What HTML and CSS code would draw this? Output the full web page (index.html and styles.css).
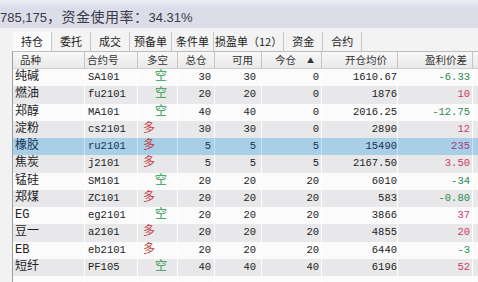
FILE: index.html
```html
<!DOCTYPE html>
<html lang="zh-CN">
<head>
    <meta charset="UTF-8">
    <title>持仓</title>
    <link rel="stylesheet" href="styles.css">
</head>
<body>
    <div class="topbar">785,175<span class="cn">，资金使用率：</span>34.31%</div>

    <div class="main">
        <div class="side"></div>
        <div class="panel">
            <div class="tabs">
                <div class="tab active">持仓</div>
                <div class="tab">委托</div>
                <div class="tab">成交</div>
                <div class="tab w3">预备单</div>
                <div class="tab w3">条件单</div>
                <div class="tab wide">损盈单（12）</div>
                <div class="tab">资金</div>
                <div class="tab">合约</div>
            </div>

            <div class="grid">
                <div class="row head">
                    <div>品种</div><div>合约号</div><div>多空</div><div>总仓</div><div>可用</div>
                    <div>今仓<span class="sort">▲</span></div><div>开仓均价</div><div>盈利价差</div><div></div>
                </div>
                <div class="row">
                    <div>纯碱</div><div>SA101</div><div class="short">空</div><div>30</div><div>30</div><div>0</div><div>1610.67</div><div class="down">-6.33</div><div></div>
                </div>
                <div class="row alt">
                    <div>燃油</div><div>fu2101</div><div class="short">空</div><div>20</div><div>20</div><div>0</div><div>1876</div><div class="up">10</div><div></div>
                </div>
                <div class="row">
                    <div>郑醇</div><div>MA101</div><div class="short">空</div><div>40</div><div>40</div><div>0</div><div>2016.25</div><div class="down">-12.75</div><div></div>
                </div>
                <div class="row alt">
                    <div>淀粉</div><div>cs2101</div><div class="long">多</div><div>30</div><div>30</div><div>0</div><div>2890</div><div class="up">12</div><div></div>
                </div>
                <div class="row sel">
                    <div>橡胶</div><div>ru2101</div><div class="long">多</div><div>5</div><div>5</div><div>5</div><div>15490</div><div class="up">235</div><div></div>
                </div>
                <div class="row alt">
                    <div>焦炭</div><div>j2101</div><div class="long">多</div><div>5</div><div>5</div><div>5</div><div>2167.50</div><div class="up">3.50</div><div></div>
                </div>
                <div class="row">
                    <div>锰硅</div><div>SM101</div><div class="short">空</div><div>20</div><div>20</div><div>20</div><div>6010</div><div class="down">-34</div><div></div>
                </div>
                <div class="row alt">
                    <div>郑煤</div><div>ZC101</div><div class="long">多</div><div>20</div><div>20</div><div>20</div><div>583</div><div class="down">-0.80</div><div></div>
                </div>
                <div class="row">
                    <div>EG</div><div>eg2101</div><div class="short">空</div><div>20</div><div>20</div><div>20</div><div>3866</div><div class="up">37</div><div></div>
                </div>
                <div class="row alt">
                    <div>豆一</div><div>a2101</div><div class="long">多</div><div>20</div><div>20</div><div>20</div><div>4855</div><div class="up">20</div><div></div>
                </div>
                <div class="row">
                    <div>EB</div><div>eb2101</div><div class="long">多</div><div>20</div><div>20</div><div>20</div><div>6440</div><div class="down">-3</div><div></div>
                </div>
                <div class="row alt">
                    <div>短纤</div><div>PF105</div><div class="short">空</div><div>40</div><div>40</div><div>40</div><div>6196</div><div class="up">52</div><div></div>
                </div>
                <div class="row">
                    <div></div><div></div><div></div><div></div><div></div><div></div><div></div><div></div><div></div>
                </div>
            </div>
        </div>
    </div>
</body>
</html>
```

FILE: styles.css
```css
body {
    margin: 0;
    width: 478px;
    height: 282px;
    overflow: hidden;
    background: #f3f3f3;
    color: #222;
    font-family: "Noto Sans CJK SC", sans-serif;
}

.topbar {
    height: 22px;
    padding-top: 6px;
    line-height: 22px;
    background: linear-gradient(#eef0f5, #dbdde9 25%, #dcdde9);
    color: #3a3a48;
    font-family: "Liberation Sans", "Noto Sans CJK SC", sans-serif;
    font-size: 13px;
    white-space: nowrap;
}

.topbar .cn {
    font-size: 14px;
    letter-spacing: 0.5px;
}

.main {
    display: flex;
}

.side {
    width: 12px;
    background: #f2f2f2;
}

.panel {
    flex: 1;
}

.tabs {
    display: flex;
    align-items: flex-end;
    height: 23px;
    padding-left: 1px;
    background: #f3f3f3;
}

.tab {
    height: 19px;
    line-height: 19px;
    padding: 0 8px;
    font-size: 11px;
    border-right: 1px solid #c6c6c6;
    white-space: nowrap;
}

.tab.w3 {
    padding: 0 4px;
}

.tab.wide {
    padding: 0 1px;
}

.tab.active {
    background: #fbfbfb;
}

.grid {
    border-left: 1px solid #9e9e9e;
    background: #fbfbfb;
}

.row {
    display: grid;
    grid-template-columns: 72px 53px 40px 37px 47px 60px 76px 75px 1fr;
    height: 17.25px;
}

.row > div {
    border-right: 1px solid #fff;
    line-height: 17px;
    white-space: nowrap;
    overflow: hidden;
    text-align: right;
    font-family: "Liberation Mono", "Noto Sans CJK SC", monospace;
    font-size: 10.5px;
}

.row > div:nth-child(1) {
    text-align: left;
    padding-left: 2px;
    font-size: 12px;
}

.row > div:nth-child(2) {
    text-align: left;
    padding-left: 3px;
}

.row > div:nth-child(3) {
    text-align: left;
    padding-left: 5px;
    font-size: 12px;
}

.row > div:nth-child(3).short {
    padding-left: 17px;
}

.row > div:nth-child(4) { padding-right: 3px; }
.row > div:nth-child(5) { padding-right: 5px; }
.row > div:nth-child(6) { padding-right: 2px; }
.row > div:nth-child(7) { padding-right: 0; }
.row > div:nth-child(8) { padding-right: 2px; }
.row > div:nth-child(9) { border-right: none; }

.row.alt {
    background: #e8e8ea;
}

.row.sel {
    background: #a8cfe5;
    color: #17325c;
}

.row.sel > div {
    border-right-color: #cbe2ef;
}

.row.head {
    box-sizing: border-box;
    height: 18px;
    background: linear-gradient(#f8f8f8, #e9e9e9);
    border-top: 1px solid #bdbdbd;
    border-bottom: 1px solid #cfcfcf;
}

.row.head > div {
    border-right: 1px solid #c4c4c4;
    line-height: 16px;
    font-family: "Noto Sans CJK SC", sans-serif;
    font-size: 10.5px;
    color: #333;
}

.row.head > div:nth-child(1) { padding-left: 7px; }
.row.head > div:nth-child(2) { padding-left: 2px; }
.row.head > div:nth-child(3),
.row.head > div:nth-child(4) { text-align: center; padding: 0; }
.row.head > div:nth-child(5) { padding-right: 8px; }
.row.head > div:nth-child(6) { padding-right: 7px; }
.row.head > div:nth-child(7) { padding-right: 10px; }
.row.head > div:nth-child(8) { padding-right: 5px; }
.row.head > div:nth-child(9) { border-right: none; }

.sort {
    margin-left: 11px;
    font-size: 7px;
    vertical-align: 1px;
}

.long { color: #c43b3f; }
.short { color: #2f9a4b; }
.up { color: #cf3a63; }
.down { color: #2c8a4f; }

.row.sel .up {
    color: #a33a88;
}
```
